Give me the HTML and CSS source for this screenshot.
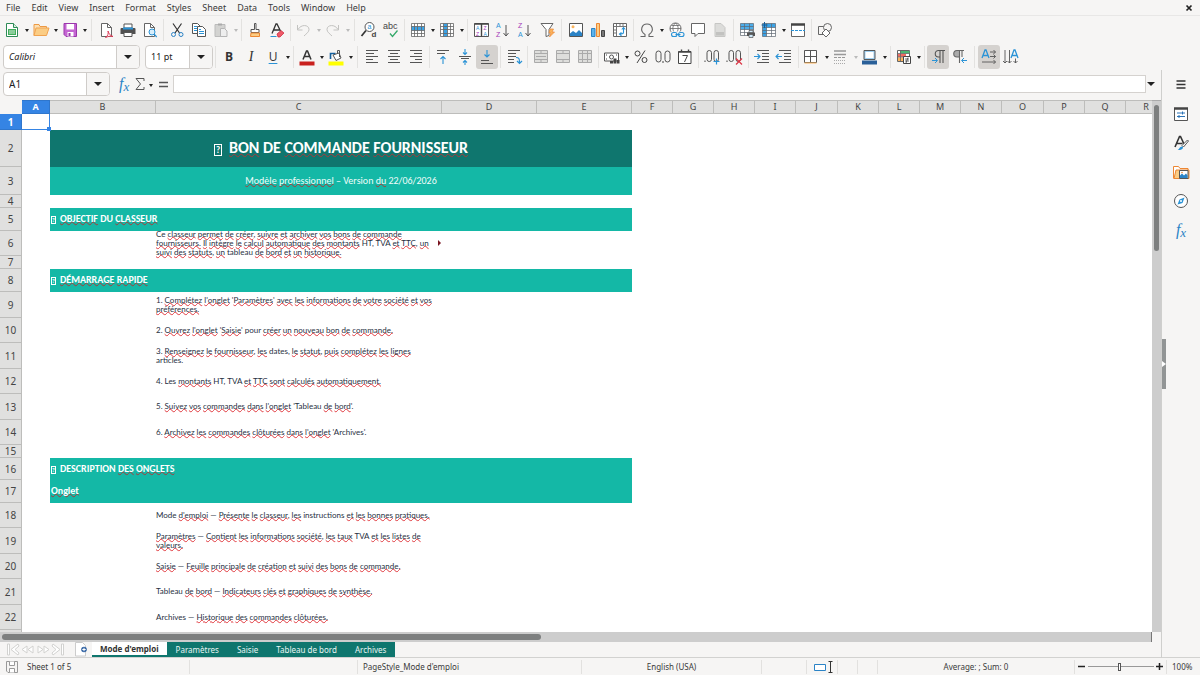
FILE: index.html
```html
<!DOCTYPE html>
<html lang="fr">
<head>
<meta charset="utf-8">
<title>Bon de commande fournisseur</title>
<link rel="stylesheet" href="styles.css">
</head>
<body>
<div class="app">
<nav class="menubar" aria-label="Menu">
<button>File</button><button>Edit</button><button>View</button><button>Insert</button><button>Format</button><button>Styles</button><button>Sheet</button><button>Data</button><button>Tools</button><button>Window</button><button>Help</button>
<button class="close" aria-label="Close"><svg width="8" height="8" viewBox="0 0 8 8"><path d="M1.500 1.500l5 5M6.500 1.500l-5 5" stroke="#222" stroke-width="1.700"/></svg></button>
</nav>

<div class="toolbar" role="toolbar" aria-label="Standard">
<button class="tool" aria-label="New"><svg viewBox="0 0 18 18"><path d="M3.500 2.500h7l4 4v9h-11z" fill="#fff" stroke="#2e8b57"/><path d="M10.500 2.500v4h4" fill="#d6f0dd" stroke="#2e8b57"/><path d="M5 8h8v6H5z" fill="#3fae5a"/><path d="M6 10h6M6 12h3.500M9.500 12h2.500" stroke="#fff" stroke-width=".8"/></svg></button><button class="drop" aria-label="New options"></button>
<button class="tool" aria-label="Open"><svg viewBox="0 0 18 18"><path d="M2 14.500V3.500h5l1 2h6.500v3" fill="#fbe0b4" stroke="#ed9a44"/><path d="M2 14.500l2-7.500h13l-2.500 7.500z" fill="#fbcd85" stroke="#f0a350"/></svg></button><button class="drop" aria-label="Open options"></button>
<button class="tool" aria-label="Save"><svg viewBox="0 0 18 18"><path d="M3 2.500h12.500v13H5l-2-2z" fill="#c465d2" stroke="#9a37ab"/><path d="M5.500 3h7.500v5.500H5.500z" fill="#fff"/><path d="M6.500 11h6v4.500h-6z" fill="#fff"/><path d="M7.500 12h2v3h-2z" fill="#9a37ab"/></svg></button><button class="drop" aria-label="Save options"></button>
<i class="sep wide"></i>
<button class="tool" aria-label="Export as PDF"><svg viewBox="0 0 18 18"><path d="M4.500 2.500h6l4 4v9h-10z" fill="#fff" stroke="#666"/><path d="M10.500 2.500v4h4" fill="none" stroke="#666"/><path d="M8.500 16.500c2.500-1.500 3-4 2.500-6.500 1 3 2 4.500 5 5.500-3-.8-5 0-7.500 1z" fill="#fff" stroke="#d9304c" stroke-width=".9"/></svg></button>
<button class="tool" aria-label="Print"><svg viewBox="0 0 18 18"><path d="M5 3h8v4H5z" fill="#fff" stroke="#555"/><path d="M2.500 7h13a1 1 0 0 1 1 1v5h-15V8a1 1 0 0 1 1-1z" fill="#505050"/><path d="M4 6.500h10v2H4z" fill="#2b93d6"/><path d="M5 11.500h8v4H5z" fill="#fff" stroke="#555"/></svg></button>
<button class="tool" aria-label="Print preview"><svg viewBox="0 0 18 18"><path d="M3.500 2.500h6l4 4v9h-10z" fill="#fff" stroke="#666"/><path d="M9.500 2.500v4h4" fill="none" stroke="#666"/><circle cx="11" cy="11" r="3" fill="#d8eefb" stroke="#2b93d6"/><path d="M13.200 13.200l2.500 2.800" stroke="#2b93d6" stroke-width="1.200"/></svg></button>
<i class="sep"></i>
<button class="tool" aria-label="Cut"><svg viewBox="0 0 18 18"><path d="M5 2.500l6.500 9.500M13.500 2.500L7 12" stroke="#333" stroke-width="1.200"/><circle cx="5.500" cy="13.500" r="2" fill="none" stroke="#2b83c6"/><circle cx="13" cy="13.500" r="2" fill="none" stroke="#2b83c6"/></svg></button>
<button class="tool" aria-label="Copy"><svg viewBox="0 0 18 18"><path d="M2.500 2.500h5l2.500 2.500v7.500H2.500z" fill="#fff" stroke="#555"/><path d="M4 5.500h3M4 7.500h4M4 9.500h4" stroke="#2b93d6"/><path d="M7.500 5.500h5l3 3v7h-8z" fill="#fff" stroke="#555"/><path d="M9 10.500h5M9 12.500h5M9 8.500h2" stroke="#2b93d6"/></svg></button>
<button class="tool" aria-label="Paste" disabled><svg viewBox="0 0 18 18"><path d="M3 3.500h10v12H3z" fill="#d3d3d1" stroke="#bbb"/><path d="M6 2.500h4v2H6z" fill="#aaa"/><path d="M8.500 7.500h4l2.500 2.500v5.500H8.500z" fill="#eee" stroke="#b5b5b5"/></svg></button><button class="drop" aria-label="Paste options" disabled></button>
<i class="sep"></i>
<button class="tool" aria-label="Clone formatting"><svg viewBox="0 0 18 18"><path d="M8.500 2.500h1.500v6h3v3h-8v-3h3.500z" fill="#fff" stroke="#555"/><path d="M5 12h8.500v3.500H4.500z" fill="#fbcd85" stroke="#ed8733"/></svg></button>
<button class="tool" aria-label="Clear formatting"><svg viewBox="0 0 18 18"><path d="M4 12.500L8 3h1L12.500 10M5.500 9h6" fill="none" stroke="#333" stroke-width="1.300"/><path d="M2.500 15.500h6" stroke="#2b93d6"/><path d="M9 13l4-3.500 3 2.500-4 4h-2z" fill="#ef5a68" stroke="#c8233a" stroke-width=".7"/></svg></button>
<i class="sep"></i>
<button class="tool" aria-label="Undo" disabled><svg viewBox="0 0 18 18"><path d="M2.500 4v5h5M3 8.500c3-5.500 11-5 11 0 0 2.500-2.500 4-5 6.500" fill="none" stroke="#c3c3c1"/></svg></button><button class="drop" aria-label="Undo options" disabled></button>
<button class="tool" aria-label="Redo" disabled><svg viewBox="0 0 18 18"><path d="M14.500 4v5h-5M14 8.500c-3-5.500-11-5-11 0 0 2.500 2.500 4 5 6.500" fill="none" stroke="#c3c3c1"/></svg></button><button class="drop" aria-label="Redo options" disabled></button>
<i class="sep wide"></i>
<button class="tool" aria-label="Find and replace"><svg viewBox="0 0 18 18"><circle cx="9.500" cy="6" r="4.500" fill="#fff" stroke="#555"/><path d="M6 9.500L1.500 15" stroke="#333" stroke-width="1.700"/><text x="7.500" y="8" font-size="7" fill="#2b93d6">a</text><text x="11.500" y="16" font-size="8" font-weight="700" fill="#444">d</text></svg></button>
<button class="tool" aria-label="Spelling"><svg viewBox="0 0 18 18"><text x="1" y="8" font-size="9" fill="#444">abc</text><path d="M8 12.500l2.500 3 5-6" fill="none" stroke="#35a96a" stroke-width="1.300"/></svg></button>
<i class="sep"></i>
<button class="tool" aria-label="Row"><svg viewBox="0 0 18 18"><path d="M2.500 2.500h13v13h-13z" fill="#fff"/><path d="M2.500 5.500h13v4h-13z" fill="#3ba2e5"/><path d="M2.500 2.500h13v13h-13zM2.500 5.500h13M2.500 9.500h13M2.500 12.500h13M5.500 2.500v13M8.500 2.500v13M12.500 2.500v13" fill="none" stroke="#666" stroke-width=".8"/></svg></button><button class="drop" aria-label="Row options"></button>
<button class="tool" aria-label="Column"><svg viewBox="0 0 18 18"><path d="M2.500 2.500h13v13h-13z" fill="#fff"/><path d="M5.500 2.500h4v13h-4z" fill="#3ba2e5"/><path d="M2.500 2.500h13v13h-13zM2.500 5.500h13M2.500 8.500h13M2.500 12.500h13M5.500 2.500v13M9.500 2.500v13M12.500 2.500v13" fill="none" stroke="#666" stroke-width=".8"/></svg></button><button class="drop" aria-label="Column options"></button>
<i class="sep"></i>
<button class="tool" aria-label="Sort"><svg viewBox="0 0 18 18"><path d="M2.500 2.500h14v13h-14z" fill="#fff" stroke="#555"/><path d="M2.500 3h14M9.500 3v12.500" stroke="#444" stroke-width="1.400"/><text x="4" y="8.500" font-size="5" fill="#2b93d6">A</text><text x="4" y="14.500" font-size="5" fill="#a33ab8">Z</text><text x="11.500" y="8.500" font-size="5" fill="#a33ab8">Z</text><text x="11.500" y="14.500" font-size="5" fill="#2b93d6">A</text></svg></button>
<button class="tool" aria-label="Sort ascending"><svg viewBox="0 0 18 18"><text x="2" y="7" font-size="7" fill="#2b93d6">A</text><text x="2" y="16" font-size="7" fill="#a33ab8">Z</text><path d="M12 4v11M9.500 12l2.500 3 2.500-3" fill="none" stroke="#555"/></svg></button>
<button class="tool" aria-label="Sort descending"><svg viewBox="0 0 18 18"><text x="2" y="7" font-size="7" fill="#a33ab8">Z</text><text x="2" y="16" font-size="7" fill="#2b93d6">A</text><path d="M12 4v11M9.500 12l2.500 3 2.500-3" fill="none" stroke="#555"/></svg></button>
<button class="tool" aria-label="AutoFilter"><svg viewBox="0 0 18 18"><path d="M3 2.500h12l-4 6v6l-3 1V8.500z" fill="#fff" stroke="#666"/><path d="M12 8h3.500l-1.500 3h2.500l-5 5 1.500-4h-2z" fill="#fbb45c" stroke="#ed8733" stroke-width=".7"/></svg></button>
<i class="sep wide"></i>
<button class="tool" aria-label="Insert image"><svg viewBox="0 0 18 18"><path d="M2.500 2.500h13v13h-13z" fill="#fff" stroke="#555"/><path d="M3 15v-2.500l3-2.500 3 2 3-3 3 3v3z" fill="#2b83c6"/><circle cx="6" cy="5.800" r="1.500" fill="#fbb45c"/></svg></button>
<button class="tool" aria-label="Insert chart"><svg viewBox="0 0 18 18"><path d="M2.500 7.500h3.500v8H2.500z" fill="#5db4ec" stroke="#2b83c6"/><path d="M7.500 2.500h3v13h-3z" fill="#fbcd85" stroke="#ed8733"/><path d="M12.500 9.500h3v6h-3z" fill="#777" stroke="#444"/></svg></button>
<button class="tool" aria-label="Insert pivot table"><svg viewBox="0 0 18 18"><path d="M2.500 2.500h13v13h-13z" fill="#fff" stroke="#666"/><path d="M3 5.500h12M5.500 3v12M9 3v2M12 3v2M3 9h2M3 12h2" stroke="#777"/><path d="M12.500 7v4.500q0 1.500-3.500 1.500M10.800 8.500l1.700-2 1.800 2M10.500 11.500l-2 1.600 2 1.700" fill="none" stroke="#2b93d6" stroke-width="1.100"/></svg></button>
<i class="sep"></i>
<button class="tool" aria-label="Special character"><svg viewBox="0 0 18 18"><path d="M2.500 15.500h4.500v-2c-6-4-3-10.500 2-10.500s8 6.500 2 10.500v2h4.500" fill="none" stroke="#666" stroke-width="1.100"/></svg></button><button class="drop" aria-label="Special character options"></button>
<button class="tool" aria-label="Insert hyperlink"><svg viewBox="0 0 18 18"><circle cx="8.500" cy="7.500" r="5.500" fill="#fff" stroke="#666"/><path d="M3 7.500h11M4.500 4.500h8M8.500 2c-4 3.500-3 8 0 11M8.500 2c4 3.500 3 8 0 11" fill="none" stroke="#666" stroke-width=".8"/><path d="M4 10.500h13v6H4z" fill="#f6f5f4"/><rect x="4.500" y="11.500" width="5.500" height="4" rx="2" fill="none" stroke="#2b93d6" stroke-width="1.100"/><rect x="11.500" y="11.500" width="5.500" height="4" rx="2" fill="none" stroke="#2b93d6" stroke-width="1.100"/><path d="M8.500 13.500h5" stroke="#2b93d6"/></svg></button>
<button class="tool" aria-label="Insert comment"><svg viewBox="0 0 18 18"><path d="M2.500 2.500h13v10H9l-3 3v-3H2.500z" fill="#fff" stroke="#666"/></svg></button>
<button class="tool" aria-label="Headers and footers" disabled><svg viewBox="0 0 18 18"><path d="M4 2.500h6l4 4v9H4z" fill="#dcdcda" stroke="#c6c6c4"/><path d="M5 11h8v3.500H5z" fill="#c2c2c0"/></svg></button>
<i class="sep"></i>
<button class="tool" aria-label="Define print area"><svg viewBox="0 0 18 18"><path d="M2.500 2.500h13v12h-13z" fill="#fff"/><path d="M2.500 2.500h13v6h-13z" fill="#4dadea"/><path d="M2.500 2.500h13v12h-13zM2.500 5.500h13M2.500 8.500h13M2.500 11.500h13M6.500 2.500v12M11.500 2.500v12" fill="none" stroke="#5d6670" stroke-width=".7"/><path d="M9 11.500h8v3.500H9z" fill="#555"/><path d="M11 9.500h4v2h-4zM11 13.500h4v3h-4z" fill="#cfe8f8" stroke="#555" stroke-width=".7"/></svg></button>
<button class="tool" aria-label="Freeze rows and columns"><svg viewBox="0 0 18 18"><path d="M2.500 2.500h13v13h-13z" fill="#fff"/><path d="M2.500 2.500h13v4h-9v9h-4z" fill="#3ba2e5"/><path d="M2.500 2.500h13v13h-13zM2.500 6.500h13M2.500 9.500h13M2.500 12.500h13M6.500 2.500v13M11.500 2.500v13" fill="none" stroke="#5d6670" stroke-width=".7"/><path d="M4.500 1v6M1.500 4h6" stroke="#155f9c"/></svg></button><button class="drop" aria-label="Freeze options"></button>
<button class="tool" aria-label="Split window"><svg viewBox="0 0 18 18"><path d="M2.500 3v12.500h13V3" fill="#fff" stroke="#666"/><path d="M2 3.500h14" stroke="#444" stroke-width="2.500"/><path d="M2 9.500h14" stroke="#2b93d6" stroke-dasharray="3 1"/></svg></button>
<i class="sep"></i>
<button class="tool" aria-label="Show draw functions"><svg viewBox="0 0 18 18"><path d="M2.500 5.500h7v8h-7z" fill="none" stroke="#666"/><circle cx="11.500" cy="6.500" r="4" fill="#f6f5f4" stroke="#666"/><path d="M10 8l4 4-4 4-4-4z" fill="#fff" stroke="#666"/></svg></button>
</div>

<div class="toolbar" role="toolbar" aria-label="Formatting">
<div class="combo font-name"><input type="text" value="Calibri" aria-label="Font name"><button aria-label="Choose font"></button></div>
<div class="combo font-size"><input type="text" value="11 pt" aria-label="Font size"><button aria-label="Choose size"></button></div>
<i class="sep"></i>
<button class="tool letter bold" aria-label="Bold">B</button>
<button class="tool letter italic" aria-label="Italic">I</button>
<button class="tool letter under" aria-label="Underline">U</button><button class="drop" aria-label="Underline options"></button>
<i class="sep"></i>
<button class="tool" aria-label="Font color"><svg viewBox="0 0 18 18"><path d="M5 11.500L8.500 3h1L13 11.500M6.500 8.500h5" fill="none" stroke="#333" stroke-width="1.500"/><path d="M1.500 13.500h15v4h-15z" fill="#c9211e"/></svg></button><button class="drop" aria-label="Font color options"></button>
<button class="tool" aria-label="Highlighting"><svg viewBox="0 0 18 18"><path d="M3.500 11V5.500h5" fill="none" stroke="#155f9c" stroke-width="1.600"/><path d="M6 7l6-2 2 5-5 2.500z" fill="#fff" stroke="#555"/><path d="M10.500 5V2.500h2V9" fill="none" stroke="#555"/><path d="M1.500 13.500h15v4h-15z" fill="#ff0"/></svg></button><button class="drop" aria-label="Highlighting options"></button>
<i class="sep wide"></i>
<button class="tool" aria-label="Align left"><svg viewBox="0 0 18 18"><path d="M3 2.500h12M3 5.500h8M3 8.500h12M3 11.500h7M3 14.500h12" stroke="#555"/></svg></button>
<button class="tool" aria-label="Center"><svg viewBox="0 0 18 18"><path d="M3 2.500h12M5 5.500h8M3 8.500h12M5 11.500h8M3 14.500h12" stroke="#555"/></svg></button>
<button class="tool" aria-label="Align right"><svg viewBox="0 0 18 18"><path d="M3 2.500h12M7 5.500h8M3 8.500h12M8 11.500h7M3 14.500h12" stroke="#555"/></svg></button>
<i class="sep"></i>
<button class="tool" aria-label="Align top"><svg viewBox="0 0 18 18"><path d="M3 2.500h12M3 5.500h8" stroke="#555"/><path d="M9 16V8.500M6.500 11L9 8.500l2.500 2.500" fill="none" stroke="#2b93d6" stroke-width="1.100"/></svg></button>
<button class="tool" aria-label="Center vertically"><svg viewBox="0 0 18 18"><path d="M3 8.500h12M5 10.500h8" stroke="#555"/><path d="M9 1v5.500M7 4.500l2 2 2-2M9 17v-4.500M7 14.500l2-2 2 2" fill="none" stroke="#2b93d6" stroke-width="1.100"/></svg></button>
<button class="tool active" aria-label="Align bottom" aria-pressed="true"><svg viewBox="0 0 18 18"><path d="M3 12.500h8M3 15.500h12" stroke="#555"/><path d="M9 2v7M6.500 6.500L9 9l2.500-2.500" fill="none" stroke="#2b93d6" stroke-width="1.100"/></svg></button>
<i class="sep"></i>
<button class="tool" aria-label="Wrap text"><svg viewBox="0 0 18 18"><path d="M3 2.500h12M3 5.500h8M3 8.500h8M3 11.500h6M3 14.500h6" stroke="#555"/><path d="M11 9.500c3 0 3.500 1 3.500 5M12 13l2.500 2.500L17 13" fill="none" stroke="#2b93d6" stroke-width="1.200"/></svg></button>
<i class="sep"></i>
<button class="tool" aria-label="Merge and center cells" disabled><svg viewBox="0 0 18 18"><path d="M2.500 2.500h13v12h-13z" fill="#dededc" stroke="#aaa"/><path d="M2.500 5.500h13M2.500 11.500h13M9 2.500v3M9 11.500v3M4 8.500h10" stroke="#aaa"/></svg></button>
<button class="tool" aria-label="Merge cells" disabled><svg viewBox="0 0 18 18"><path d="M2.500 2.500h13v12h-13z" fill="#dededc" stroke="#aaa"/><path d="M2.500 5.500h13M2.500 11.500h13M9 2.500v3M9 11.500v3" stroke="#aaa"/></svg></button>
<button class="tool" aria-label="Unmerge cells" disabled><svg viewBox="0 0 18 18"><path d="M2.500 2.500h13v12h-13z" fill="#dededc" stroke="#aaa"/><path d="M2.500 5.500h13M2.500 11.500h13M6.500 2.500v12M11.500 2.500v12" stroke="#aaa"/></svg></button>
<i class="sep"></i>
<button class="tool" aria-label="Format as currency"><svg viewBox="0 0 18 18"><path d="M1.500 5h14v8h-14z" fill="#fff" stroke="#555"/><circle cx="8.500" cy="9" r="2" fill="none" stroke="#555"/><path d="M3 7h1M3 11h1M13 7h1" stroke="#444"/><path d="M7 13h3v2.500H7zM10.500 10.500h3v5h-3zM14 12h2.500v3.500H14z" fill="#444"/></svg></button><button class="drop" aria-label="Currency options"></button>
<button class="tool" aria-label="Format as percent"><svg viewBox="0 0 18 18"><circle cx="5.500" cy="5.500" r="2.500" fill="none" stroke="#444"/><circle cx="12.500" cy="12" r="2.500" fill="none" stroke="#444"/><path d="M13 2.500L5 15" stroke="#444"/></svg></button>
<button class="tool" aria-label="Format as number"><svg viewBox="0 0 18 18"><rect x="2" y="3" width="5" height="11" rx="2.500" fill="none" stroke="#555"/><rect x="11" y="3" width="5" height="11" rx="2.500" fill="none" stroke="#555"/><path d="M9 13v2" stroke="#444"/></svg></button>
<button class="tool" aria-label="Format as date"><svg viewBox="0 0 18 18"><path d="M2.500 3.500h12.500v12H2.500z" fill="#fff" stroke="#444"/><path d="M2.500 4H15M5.500 1.500v3M12.500 1.500v3" stroke="#444" stroke-width="1.400"/><path d="M6.500 7.500h5l-3 6.500" fill="none" stroke="#444"/></svg></button>
<i class="sep"></i>
<button class="tool" aria-label="Add decimal place"><svg viewBox="0 0 18 18"><rect x="4" y="2.500" width="4.500" height="11" rx="2.200" fill="none" stroke="#555"/><rect x="11" y="2.500" width="4.500" height="11" rx="2.200" fill="none" stroke="#555"/><path d="M2 12.500v1.500" stroke="#444"/><path d="M13.500 10.500v6M10.500 13.500h6" stroke="#2b93d6" stroke-width="1.200"/></svg></button>
<button class="tool" aria-label="Delete decimal place"><svg viewBox="0 0 18 18"><rect x="4" y="2.500" width="4.500" height="11" rx="2.200" fill="none" stroke="#555"/><rect x="11" y="2.500" width="4.500" height="11" rx="2.200" fill="none" stroke="#555"/><path d="M2 12.500v1.500" stroke="#444"/><path d="M11 10.500l6 6M17 10.500l-6 6" stroke="#dc3545" stroke-width="1.200"/></svg></button>
<i class="sep wide"></i>
<button class="tool" aria-label="Increase indent"><svg viewBox="0 0 18 18"><path d="M3 2.500h12M8 5.500h7M8 8.500h7M8 11.500h7M3 14.500h12" stroke="#555"/><path d="M0 8.500h6M3.500 6L6 8.500 3.500 11" fill="none" stroke="#2b93d6" stroke-width="1.100"/></svg></button>
<button class="tool" aria-label="Decrease indent"><svg viewBox="0 0 18 18"><path d="M3 2.500h12M8 5.500h7M8 8.500h7M8 11.500h7M3 14.500h12" stroke="#555"/><path d="M0 8.500h6M2.500 6L0 8.500 2.500 11" fill="none" stroke="#2b93d6" stroke-width="1.100"/></svg></button>
<i class="sep"></i>
<button class="tool" aria-label="Borders"><svg viewBox="0 0 18 18"><path d="M1.500 2.500h12v12h-12zM7.500 2.500v12M1.500 8.500h12" fill="#fff" stroke="#555"/><path d="M1.500 15h12" stroke="#fbb45c"/></svg></button><button class="drop" aria-label="Borders options"></button>
<button class="tool" aria-label="Border style" disabled><svg viewBox="0 0 18 18"><path d="M2 3h12M2 6.500h12" stroke="#999" stroke-width="1.600"/><path d="M2 9.500h12" stroke="#999" stroke-dasharray="3 1"/><path d="M2 12.500h12M2 15.500h12" stroke="#aaa" stroke-dasharray="1 1"/></svg></button><button class="drop" aria-label="Border style options" disabled></button>
<button class="tool" aria-label="Border color"><svg viewBox="0 0 18 18"><path d="M3 2.500h11v9H3z" fill="#9fd0f2" stroke="#555"/><path d="M4.500 4h8v6h-8z" fill="#fff"/><path d="M1 12.500h15v4H1z" fill="#2a6099"/></svg></button><button class="drop" aria-label="Border color options"></button>
<i class="sep"></i>
<button class="tool" aria-label="Conditional formatting"><svg viewBox="0 0 18 18"><path d="M2.500 2.500h12v11h-12z" fill="#fff" stroke="#666"/><path d="M5 3h9.500v2.500H5z" fill="#4bb873"/><path d="M3 6h8v3H3z" fill="#ef6c62"/><path d="M3 9.500h5V13H3z" fill="#fbb45c"/><path d="M2.500 5.500h12M2.500 9h12M5.500 3v10" stroke="#666" stroke-width=".8"/><path d="M8.500 8.500h7v7h-7z" fill="#fff" stroke="#444"/><path d="M10 11h4M10 13h4M13 9.500L11 15" stroke="#444" stroke-width=".8"/></svg></button><button class="drop" aria-label="Conditional formatting options"></button>
<i class="sep"></i>
<button class="tool active" aria-label="Left-to-right" aria-pressed="true"><svg viewBox="0 0 18 18"><path d="M16 2.500H9.500a3 3 0 0 0 0 6.500H11M11 2.500V15M14 2.500V15" fill="none" stroke="#555" stroke-width="1.100"/><path d="M3 12.500h5M6 10l2.500 2.500L6 15" fill="none" stroke="#2b93d6"/></svg></button>
<button class="tool" aria-label="Right-to-left"><svg viewBox="0 0 18 18"><path d="M8.500 2.500H6A3 3 0 0 0 6 9h2.500z" fill="#aaa"/><path d="M13 2.500H6A3 3 0 0 0 6 9h2.500M8.500 2.500V15M11 2.500V9" fill="none" stroke="#666" stroke-width="1.100"/><path d="M11 12.500h5M13 10l-2.500 2.500L13 15" fill="none" stroke="#2b93d6"/></svg></button>
<i class="sep wide"></i>
<button class="tool active" aria-label="Text direction left to right" aria-pressed="true"><svg viewBox="0 0 18 18"><path d="M2 10l3-8h1l3 8M3 7.500h5" fill="none" stroke="#2b93d6" stroke-width="1.300"/><path d="M10 4h5.500M13.500 2l2 2-2 2M10 8.500h5.500M13.500 6.500l2 2-2 2M2 14h13.500M13.500 12l2 2-2 2" fill="none" stroke="#555" stroke-width=".9"/></svg></button>
<button class="tool" aria-label="Text direction top to bottom"><svg viewBox="0 0 18 18"><path d="M9 10l3-8h1l3 8M10 7.500h5" fill="none" stroke="#2b93d6" stroke-width="1.300"/><path d="M3 2v13M1 13l2 2 2-2M7.500 2v13M5.500 13l2 2 2-2M13.500 10.500V15M11.500 13l2 2 2-2" fill="none" stroke="#555" stroke-width=".9"/></svg></button>
</div>

<div class="body">
<main class="main">
<div class="formula-bar">
<div class="combo name-box"><input type="text" value="A1" aria-label="Name box"><button aria-label="Choose range"></button></div>
<button class="fx" aria-label="Function wizard">f<sub>x</sub></button>
<button class="sum" aria-label="Sum"><svg width="10" height="14" viewBox="0 0 10 14"><path d="M9 4V1.500H1L5.500 7 1 12.500h8V10" fill="none" stroke="#555"/></svg></button><button class="drop" aria-label="Sum options"></button>
<button class="equals" aria-label="Formula"><svg width="9" height="7" viewBox="0 0 9 7"><path d="M0 1.500h9M0 5.500h9" stroke="#555" stroke-width="1.300"/></svg></button>
<input class="formula" type="text" aria-label="Formula input">
<button class="expand" aria-label="Expand formula bar"></button>
</div>
<div class="sheet">
<div class="grid">
<table>
<colgroup><col class="c-head"><col class="c-a"><col class="c-b"><col class="c-c"><col class="c-d"><col class="c-d"><col class="c-f"><col class="c-f"><col class="c-f"><col class="c-f"><col class="c-j"><col class="c-f"><col class="c-f"><col class="c-f"><col class="c-f"><col class="c-j"><col class="c-f"><col class="c-f"><col class="c-f"></colgroup>
<thead><tr class="h14"><td class="corner"></td><th class="sel">A</th><th>B</th><th>C</th><th>D</th><th>E</th><th>F</th><th>G</th><th>H</th><th>I</th><th>J</th><th>K</th><th>L</th><th>M</th><th>N</th><th>O</th><th>P</th><th>Q</th><th>R</th></tr></thead>
<tbody>
<tr class="h16"><th class="sel">1</th><td class="cursor"></td><td colspan="17"></td></tr>
<tr class="h37"><th>2</th><td></td><td colspan="4" class="title"><span class="tofu">?</span><s>BON</s> DE <s>COMMANDE</s> <s>FOURNISSEUR</s></td><td colspan="13"></td></tr>
<tr class="h28"><th>3</th><td></td><td colspan="4" class="subtitle"><s>Modèle</s> <s>professionnel</s> – Version <s>du</s> 22/06/2026</td><td colspan="13"></td></tr>
<tr class="h13"><th>4</th><td></td><td colspan="17"></td></tr>
<tr class="h23"><th>5</th><td></td><td colspan="4" class="section"><span class="tofu">?</span><s>OBJECTIF</s> DU <s>CLASSEUR</s></td><td colspan="13"></td></tr>
<tr class="h25"><th>6</th><td></td><td></td><td class="more"><div class="txt"><p>Ce <s>classeur</s> <s>permet</s> <s>de</s> <s>créer</s>, <s>suivre</s> <s>et</s> <s>archiver</s> <s>vos</s> <s>bons</s> <s>de</s> <s>commande</s><br><s>fournisseurs.</s> <s>Il</s> <s>intègre</s> <s>le</s> <s>calcul</s> <s>automatique</s> <s>des</s> <s>montants</s> HT, TVA <s>et</s> <s>TTC</s>, <s>un</s><br><s>suivi</s> <s>des</s> <s>statuts</s>, <s>un</s> tableau <s>de</s> <s>bord</s> <s>et</s> <s>un</s> <s>historique.</s></p></div></td><td colspan="15"></td></tr>
<tr class="h13"><th>7</th><td></td><td colspan="17"></td></tr>
<tr class="h23"><th>8</th><td></td><td colspan="4" class="section"><span class="tofu">?</span><s>DÉMARRAGE</s> <s>RAPIDE</s></td><td colspan="13"></td></tr>
<tr class="h26"><th>9</th><td></td><td></td><td><div class="txt"><p>1. <s>Complétez</s> <s>l'onglet</s> '<s>Paramètres</s>' <s>avec</s> <s>les</s> <s>informations</s> <s>de</s> <s>votre</s> <s>société</s> <s>et</s> <s>vos</s><br><s>préférences.</s></p></div></td><td colspan="15"></td></tr>
<tr class="h25"><th>10</th><td></td><td></td><td><div class="txt"><p>2. <s>Ouvrez</s> <s>l'onglet</s> '<s>Saisie</s>' pour <s>créer</s> <s>un</s> <s>nouveau</s> <s>bon</s> <s>de</s> <s>commande.</s></p></div></td><td colspan="15"></td></tr>
<tr class="h26"><th>11</th><td></td><td></td><td><div class="txt"><p>3. <s>Renseignez</s> <s>le</s> <s>fournisseur</s>, <s>les</s> dates, <s>le</s> <s>statut</s>, <s>puis</s> <s>complétez</s> <s>les</s> <s>lignes</s><br>articles.</p></div></td><td colspan="15"></td></tr>
<tr class="h25"><th>12</th><td></td><td></td><td><div class="txt"><p>4. Les <s>montants</s> HT, TVA <s>et</s> <s>TTC</s> <s>sont</s> <s>calculés</s> <s>automatiquement.</s></p></div></td><td colspan="15"></td></tr>
<tr class="h26"><th>13</th><td></td><td></td><td><div class="txt"><p>5. <s>Suivez</s> <s>vos</s> <s>commandes</s> <s>dans</s> <s>l'onglet</s> 'Tableau <s>de</s> <s>bord</s>'.</p></div></td><td colspan="15"></td></tr>
<tr class="h25"><th>14</th><td></td><td></td><td><div class="txt"><p>6. <s>Archivez</s> <s>les</s> <s>commandes</s> <s>clôturées</s> <s>dans</s> <s>l'onglet</s> 'Archives'.</p></div></td><td colspan="15"></td></tr>
<tr class="h13"><th>15</th><td></td><td colspan="17"></td></tr>
<tr class="h22"><th>16</th><td></td><td colspan="4" class="section"><span class="tofu">?</span>DESCRIPTION <s>DES</s> <s>ONGLETS</s></td><td colspan="13"></td></tr>
<tr class="h23"><th>17</th><td></td><td colspan="4" class="section"><s>Onglet</s></td><td colspan="13"></td></tr>
<tr class="h25"><th>18</th><td></td><td></td><td><div class="txt"><p>Mode <s>d'emploi</s> — <s>Présente</s> <s>le</s> <s>classeur</s>, <s>les</s> instructions <s>et</s> <s>les</s> <s>bonnes</s> <s>pratiques.</s></p></div></td><td colspan="15"></td></tr>
<tr class="h26"><th>19</th><td></td><td></td><td><div class="txt"><p><s>Paramètres</s> — <s>Contient</s> <s>les</s> <s>informations</s> <s>société</s>, <s>les</s> <s>taux</s> TVA <s>et</s> <s>les</s> <s>listes</s> <s>de</s><br><s>valeurs.</s></p></div></td><td colspan="15"></td></tr>
<tr class="h25"><th>20</th><td></td><td></td><td><div class="txt"><p><s>Saisie</s> — <s>Feuille</s> <s>principale</s> <s>de</s> <s>création</s> <s>et</s> <s>suivi</s> <s>des</s> <s>bons</s> <s>de</s> <s>commande.</s></p></div></td><td colspan="15"></td></tr>
<tr class="h26"><th>21</th><td></td><td></td><td><div class="txt"><p>Tableau <s>de</s> <s>bord</s> — <s>Indicateurs</s> <s>clés</s> <s>et</s> <s>graphiques</s> <s>de</s> <s>synthèse.</s></p></div></td><td colspan="15"></td></tr>
<tr class="h25"><th>22</th><td></td><td></td><td><div class="txt"><p>Archives — <s>Historique</s> <s>des</s> <s>commandes</s> <s>clôturées.</s></p></div></td><td colspan="15"></td></tr>
<tr class="h13"><th></th><td></td><td colspan="17"></td></tr>
</tbody>
</table>
</div>
<div class="vscroll"><div class="thumb"></div></div>
<div class="hscroll"><div class="thumb"></div></div>
</div>
<div class="tabs">
<div class="tab-nav">
<button disabled aria-label="First sheet"><svg viewBox="0 0 14 13"><path d="M1.500 1v11h2V1zM12 1L5 6.500 12 12l1-2-4-3.500L13 3z" fill="#fff" stroke="#d2d2d0"/></svg></button>
<button disabled aria-label="Previous sheet"><svg viewBox="0 0 14 13"><path d="M6 3L1 6.500 6 10zM12 3L7 6.500l5 3.500z" fill="#fff" stroke="#d2d2d0"/></svg></button>
<button disabled aria-label="Next sheet"><svg viewBox="0 0 14 13"><path d="M2 3l5 3.500L2 10zM8 3l5 3.500L8 10z" fill="#fff" stroke="#d2d2d0"/></svg></button>
<button disabled aria-label="Last sheet"><svg viewBox="0 0 14 13"><path d="M12.500 1v11h-2V1zM2 1l7 5.500L2 12l-1-2 4-3.500L1 3z" fill="#fff" stroke="#d2d2d0"/></svg></button>
</div>
<button class="add-sheet" aria-label="Add sheet"><svg width="14" height="15" viewBox="0 0 14 15"><path d="M1.500.500h7l3 3v10.500h-10z" fill="#fff" stroke="#ccc"/><circle cx="10" cy="7.500" r="2.800" fill="#3465a4"/><path d="M10 5.800v3.400M8.300 7.500h3.400" stroke="#fff"/></svg></button>
<button class="tab current">Mode d'emploi</button><button class="tab">Paramètres</button><button class="tab">Saisie</button><button class="tab">Tableau de bord</button><button class="tab">Archives</button>
</div>
</main>
<aside class="sidebar" aria-label="Sidebar">
<button aria-label="Sidebar settings"><svg viewBox="0 0 18 18"><path d="M4.500 5h9M4.500 8.500h9M4.500 12h9" stroke="#333" stroke-width="1.300"/></svg></button>
<button aria-label="Properties"><svg viewBox="0 0 18 18"><path d="M2.500 3v12.500h13V3" fill="#fff" stroke="#555"/><path d="M2 3.500h14" stroke="#444" stroke-width="2.500"/><path d="M5 8h8M5 11.500h8M10.500 6.500v3M7 10v3" stroke="#2b73b6"/></svg></button>
<button aria-label="Styles"><svg viewBox="0 0 18 18"><path d="M3 13L7.500 2.500h1L12 10M4.500 9.500h6" fill="none" stroke="#333" stroke-width="1.600"/><path d="M10 11.500L15.500 6l1 1-5 6z" fill="#fff" stroke="#555"/><path d="M5.500 16c2-.5 2-4 5-3.500 1.500 1.500-.5 4-5 3.500z" fill="#2b93d6"/></svg></button>
<button aria-label="Gallery"><svg viewBox="0 0 18 18"><path d="M1.500 15.500v-12h5l1.500 2h8v3" fill="#fff" stroke="#ed8733"/><path d="M2 15.500L4 7h13v8.500z" fill="#fbcd85" stroke="#ed8733"/><path d="M7.500 7.500h8.500v8H7.500z" fill="#fff" stroke="#555"/><path d="M8 15v-2.500l2-2 2 2 2-2 1.500 2V15z" fill="#2b83c6"/><circle cx="10" cy="9.500" r=".8" fill="#ed8733"/></svg></button>
<button aria-label="Navigator"><svg viewBox="0 0 18 18"><circle cx="9" cy="9" r="6.500" fill="#fff" stroke="#555"/><path d="M12.500 5.500L10.500 11 5.500 12.500 7.500 7.500z" fill="#2b93d6"/><circle cx="9" cy="9" r="1" fill="#fff"/></svg></button>
<button class="fx" aria-label="Functions">f<sub>x</sub></button>
<div class="handle"><svg width="4" height="6" viewBox="0 0 4 6"><path d="M0 0l4 3-4 3z" fill="#fff"/></svg></div>
</aside>
</div>

<footer class="status">
<span class="doc"><svg width="12" height="12" viewBox="0 0 12 12"><path d="M.500.500h11v11H2l-1.500-1.500z" fill="#f6f5f4" stroke="#999"/><path d="M3.500.500v4h5v-4M3.500 11.500v-4h5v4" fill="#fff" stroke="#999"/></svg></span>
<span class="count">Sheet 1 of 5</span>
<span class="gap"></span>
<span class="style">PageStyle_Mode d'emploi</span>
<span class="lang">English (USA)</span>
<span class="ins"></span>
<span class="mode"><svg width="20" height="12" viewBox="0 0 20 12"><path d="M1.500 3.500h11v6h-11z" fill="#fff" stroke="#2b83c6"/><path d="M15.500.500h4M15.500 11.500h4M17.500.500v11" stroke="#333"/></svg></span>
<span class="mini"></span><span class="mini"></span>
<span class="sums">Average: ; Sum: 0</span>
<span class="zoom"><button aria-label="Zoom out"><svg width="7" height="7" viewBox="0 0 7 7"><path d="M0 3.500h7" stroke="#222" stroke-width="1.500"/></svg></button><input type="range" min="0" max="100" value="48" aria-label="Zoom"><button aria-label="Zoom in"><svg width="7" height="7" viewBox="0 0 7 7"><path d="M0 3.500h7M3.500 0v7" stroke="#222" stroke-width="1.500"/></svg></button></span>
<span class="percent">100%</span>
</footer>
</div>
</body>
</html>
```
FILE: styles.css
```css
* { box-sizing: border-box; }
body { margin: 0; background: #f6f5f4; color: #3a3a3a; font: 9px/12px "Noto Sans", "Open Sans", sans-serif; }
button, input { font: inherit; color: inherit; margin: 0; padding: 0; border: 0; background: none; }
svg text { font-family: "Liberation Sans", sans-serif; }
.app { display: flex; flex-direction: column; height: 100vh; overflow: hidden; }

.menubar { display: flex; align-items: center; gap: 11px; height: 16px; padding: 0 7px 0 6px; border-bottom: 1px solid #e8e7e6; flex: none; }
.menubar button { line-height: 15px; }
.menubar .close { margin-left: auto; display: flex; }

.toolbar { display: flex; align-items: center; height: 27px; padding-left: 1px; flex: none; }
.tool { width: 22px; height: 24px; flex: none; display: flex; align-items: center; justify-content: center; border-radius: 3px; }
.tool svg { width: 18px; height: 18px; fill: none; overflow: visible; }
.tool.active { background: #d5d2cf; }
.tool.letter { font-size: 12px; font-family: "Open Sans", sans-serif; color: #333; }
.tool.bold { font-weight: 700; }
.tool.italic { font-family: "Liberation Serif", serif; font-style: italic; font-size: 14px; }
.tool.under { text-decoration: underline; text-decoration-color: #2b93d6; text-underline-offset: 2px; }
.drop { width: 7px; height: 22px; flex: none; display: flex; align-items: center; justify-content: center; }
.drop::before, .combo button::before, .expand::before { content: ""; border: 2px solid transparent; border-top: 3px solid #222; border-bottom: 0; margin-top: 2px; }
.drop:disabled::before { border-top-color: #bbb; }
.sep { width: 5px; height: 22px; flex: none; background: linear-gradient(#e3e2e0, #e3e2e0) center / 1px 100% no-repeat; }
.sep.wide { width: 7px; }

.combo { display: flex; height: 24px; flex: none; border: 1px solid #cfccc9; border-radius: 4px; background: #fff; overflow: hidden; }
.combo input { flex: 1; min-width: 0; padding-left: 5px; outline: 0; color: #222; }
.combo button { width: 23px; display: flex; align-items: center; justify-content: center; background: #f6f5f4; border-left: 1px solid #cfccc9; }
.combo button::before, .expand::before { border-width: 4px 4px 0; margin: 0; }
.font-name { width: 137px; margin: 0 5px 0 2px; }
.font-name input { font-style: italic; }
.font-size { width: 68px; }

.body { display: flex; flex: 1; min-height: 0; }
.main { display: flex; flex-direction: column; flex: 1; min-width: 0; border-right: 1px solid #cfcfcd; }
.formula-bar { display: flex; align-items: center; height: 30px; padding: 0 5px 2px 3px; flex: none; }
.name-box { width: 107px; margin-right: 9px; }
.name-box input { font-size: 10px; }
.fx { width: 14px; font: italic 16px/18px "Liberation Serif", serif; color: #2b83c6; white-space: nowrap; text-align: left; }
.fx sub { font-size: 13px; line-height: 1px; vertical-align: -2px; }
.sidebar .fx { text-align: center; }
.sum { width: 14px; display: flex; justify-content: center; }
.equals { width: 18px; display: flex; justify-content: center; }
.formula { flex: 1; min-width: 0; height: 18px; margin-left: 1px; border: 1px solid #d5d2cf; background: #fff; }
.expand { width: 9px; display: flex; margin-left: 1px; }

.sheet { flex: 1; min-height: 0; display: grid; grid-template: minmax(0, 1fr) 10px / minmax(0, 1fr) 9px; }
.grid { overflow: hidden; background: #fff; }
table { border-collapse: separate; border-spacing: 0; table-layout: fixed; width: 1167px; }
.c-head { width: 22px; } .c-a { width: 28px; } .c-b { width: 106px; } .c-c { width: 286px; } .c-d { width: 95px; } .c-f { width: 41px; } .c-j { width: 42px; }
th, td { padding: 0; }
th { background: #e0e0df; border: solid #bdbdbb; border-width: 0 1px 1px 0; font-weight: 400; line-height: 10px; color: #444; }
thead th { border-top-width: 1px; }
tbody th { font-size: 10px; }
th.sel { background: #3584e4; color: #fff; font-weight: 700; border-color: #2f76cc; }
.corner { background: #f6f5f4; }
.cursor { border: solid #3584e4; border-width: 0 1px 1px 0; position: relative; }
.cursor::after { content: ""; position: absolute; right: -2px; bottom: -2px; width: 4px; height: 4px; background: #3584e4; }
.h13 { height: 13px; } .h14 { height: 14px; } .h16 { height: 16px; } .h22 { height: 22px; } .h23 { height: 23px; } .h25 { height: 25px; } .h26 { height: 26px; } .h28 { height: 28px; } .h37 { height: 37px; }
.title, .subtitle, .section { font-family: Carlito, Lato, sans-serif; }
.title { background: #0f766e; color: #fff; font-size: 16px; line-height: 20px; font-weight: 700; text-align: center; padding-bottom: 2px; }
.subtitle { background: #14b8a6; color: #f0fdfa; text-align: center; font-size: 10px; line-height: 12px; padding-bottom: 1px; }
.section { background: #14b8a6; color: #fff; font-size: 10px; font-weight: 700; padding: 0 0 1px 1px; line-height: 12px; }
.txt { display: flex; align-items: center; height: 24px; color: #27303f; font-family: Lato, Carlito, sans-serif; font-size: 8px; line-height: 9px; white-space: nowrap; }
.txt p { margin: 0 0 1px; }
s { text-decoration: underline wavy #e0393e 1px; text-underline-offset: -1px; text-decoration-skip-ink: none; }
.title s, .subtitle s, .section s { text-decoration-color: #a83a3a; }
.title s { text-underline-offset: 0; }
.tofu { display: inline-block; border: 1px solid currentColor; width: 5px; height: 8px; margin-right: 4px; font-size: 6px; line-height: 6px; text-align: center; }
.title .tofu { width: 8px; height: 12px; margin-right: 7px; font-size: 9px; line-height: 10px; }
.more { position: relative; }
.more::after { content: ""; position: absolute; right: 1px; top: 9px; border: solid transparent; border-width: 3px 0 3px 3px; border-left-color: #7a1520; }

.vscroll { background: #cdcdcd; border-top: 1px solid #aaa; padding: 4px 2px; }
.vscroll .thumb { height: 28%; border-radius: 3px; background: #7d7f7f; }
.hscroll { background: #cdcdcd; padding: 2px; border-right: 1px solid #777; }
.hscroll .thumb { width: 47%; height: 6px; border-radius: 3px; background: #7d7f7f; }

.tabs { display: flex; height: 16px; border-bottom: 1px solid #d2d2d0; flex: none; font-size: 8px; }
.tab-nav { display: flex; align-items: center; gap: 1px; padding-left: 6px; width: 74px; }
.tab-nav button { width: 14px; height: 13px; }
.tab-nav svg { display: block; }
.add-sheet { width: 18px; }
.add-sheet svg { display: block; }
.tab { padding: 0 9px; background: #0f766e; color: #e9f5f3; }
.tab.current { padding: 0 8px; background: #fff; color: #333; font-weight: 700; border-bottom: 2px solid #0f766e; }

.sidebar { width: 38px; flex: none; display: flex; flex-direction: column; align-items: center; gap: 11px; padding-top: 6px; position: relative; border-bottom: 1px solid #d2d2d0; }
.sidebar button { width: 18px; height: 18px; }
.sidebar svg { display: block; }
.sidebar .handle { position: absolute; left: 0; top: 269px; width: 4px; height: 50px; background: #929595; display: flex; align-items: center; }

.status { display: flex; height: 17px; flex: none; align-items: center; font-size: 8px; }
.status > span { height: 14px; line-height: 14px; border-right: 1px solid #e2e1df; white-space: nowrap; flex: none; }
.status .doc { width: 22px; padding: 1px 0 0 6px; border: 0; }
.doc svg, .mode svg { display: block; }
.status .count { width: 168px; padding-left: 5px; }
.status .gap { width: 168px; }
.status .style { width: 224px; padding-left: 5px; }
.status .lang { width: 180px; text-align: center; }
.status .ins { width: 45px; }
.status .mode { width: 31px; padding: 1px 0 0 6px; }
.status .mini { width: 20px; }
.status .sums { flex: 1; text-align: center; }
.status .zoom { width: 92px; display: flex; align-items: center; justify-content: space-between; padding: 0 3px; }
.zoom button { display: flex; }
.zoom input { appearance: none; width: 66px; height: 12px; background: linear-gradient(#999, #999) center / 100% 1px no-repeat; }
.zoom input::-webkit-slider-thumb { appearance: none; width: 3px; height: 8px; border: 1px solid #555; background: #fff; }
.status .percent { width: 33px; padding-left: 5px; border: 0; }
```
